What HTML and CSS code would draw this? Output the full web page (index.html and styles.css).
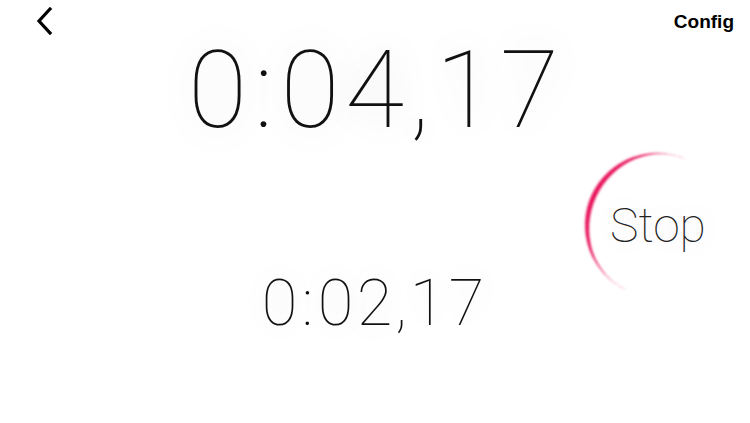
FILE: index.html
```
<!DOCTYPE html>
<html>
<head>
<meta charset="utf-8">
<link rel="stylesheet" href="styles.css">
</head>
<body>
<div class="app">
  <header class="topbar">
    <button class="back" aria-label="Back">
      <svg width="18" height="28" viewBox="0 0 18 28"><path d="M15 2 L4 14 L15 26" fill="none" stroke="#000" stroke-width="3.2" stroke-linecap="square" stroke-linejoin="miter"/></svg>
    </button>
    <span class="config">Config</span>
  </header>
  <main class="stage">
    <div class="time time-main"><span class="d">0</span><span class="c">:</span><span class="d">0</span><span class="d">4</span><span class="m">,</span><span class="d">1</span><span class="d">7</span></div>
    <div class="stop-row">
      <button class="stop">Stop</button>
    </div>
    <div class="time time-lap"><span class="d">0</span><span class="c">:</span><span class="d">0</span><span class="d">2</span><span class="m">,</span><span class="d">1</span><span class="d">7</span></div>
  </main>
</div>
</body>
</html>
```
FILE: styles.css
```
* { box-sizing: border-box; }
html, body { margin: 0; padding: 0; background: #fff; }
body { width: 750px; height: 423px; overflow: hidden; font-family: Roboto, "Liberation Sans", sans-serif; }
.app { display: flex; flex-direction: column; }
.topbar {
  height: 32px;
  display: flex;
  justify-content: space-between;
  align-items: flex-start;
  padding: 0 16px 0 35px;
}
.back { background: none; border: 0; padding: 0; margin-top: 7px; display: block; }
.back svg { display: block; }
.config {
  font-family: "Liberation Sans", sans-serif;
  font-weight: 700;
  font-size: 19px;
  line-height: 1;
  margin-top: 12px;
  color: #000;
}
.stage { display: flex; flex-direction: column; }
.time {
  display: flex;
  justify-content: center;
  font-weight: 100;
  color: #111;
}
.time span { display: block; text-align: center; }
.time-main {
  font-size: 108px;
  line-height: 108px;
  margin-top: 4px;
  margin-left: -3px;
  text-shadow: 0 0 40px rgba(0,0,0,0.18);
}
.time-main .d { width: 64.5px; }
.time-main .c { width: 28px; }
.time-main .m { width: 26px; }
.stop-row { display: flex; justify-content: flex-end; padding-right: 21px; margin-top: 9px; }
.stop {
  position: relative;
  width: 144px; height: 144px;
  border: 0; border-radius: 50%;
  background: transparent;
  font-family: Roboto, "Liberation Sans", sans-serif;
  font-weight: 100;
  font-size: 48px;
  color: #222;
  padding: 0 0 0 2px;
  display: flex; align-items: center; justify-content: center;
  text-shadow: 0 0 30px rgba(0,0,0,0.16);
}
.stop::before {
  content: "";
  position: absolute;
  inset: 0;
  border-radius: 50%;
  border-left: 5px solid #e8175d;
  transform: rotate(25deg);
  filter: blur(0.8px);
}
.time-lap {
  font-size: 65px;
  line-height: 65px;
  margin-top: -26px;
  margin-left: -4px;
  text-shadow: 0 0 30px rgba(0,0,0,0.16);
}
.time-lap .d { width: 39px; }
.time-lap .c { width: 17px; }
.time-lap .m { width: 14px; }
```
